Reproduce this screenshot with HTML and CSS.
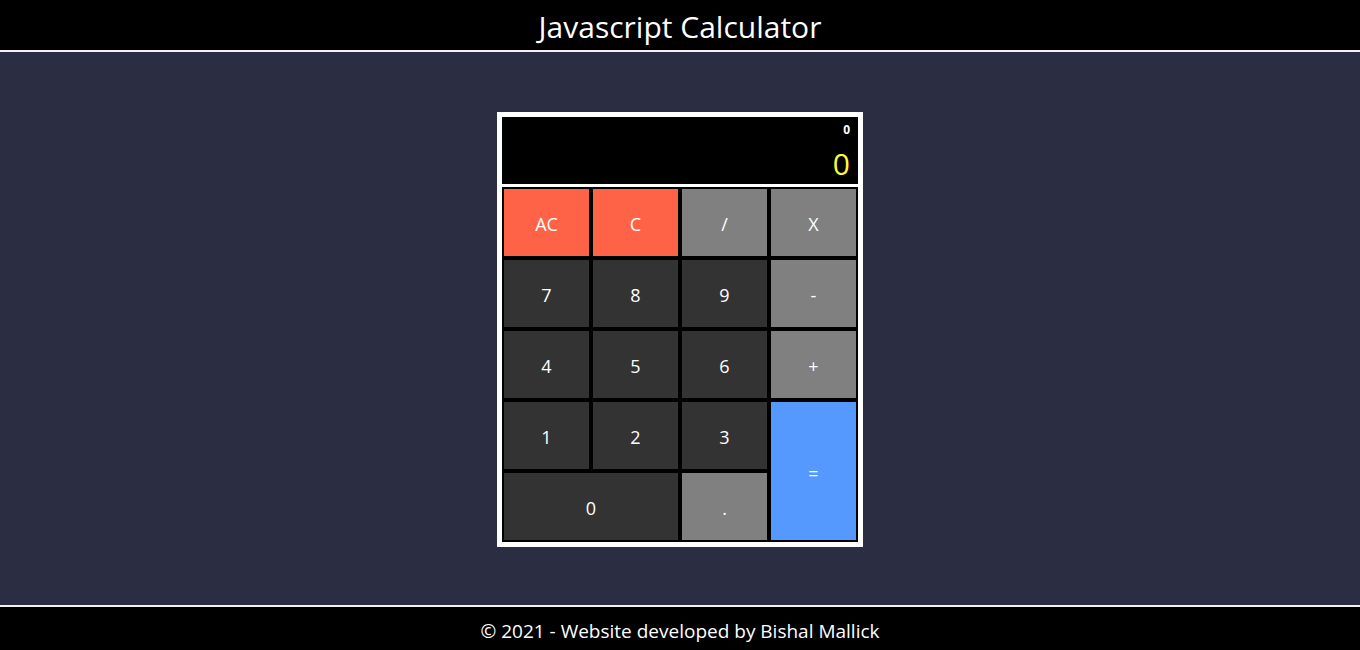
FILE: index.html
```html
<!DOCTYPE html>
<html lang="en">
<head>
<meta charset="utf-8">
<title>Javascript Calculator</title>
<link rel="stylesheet" href="styles.css">
</head>
<body>
<header class="site-header">
  <h1 class="site-title">Javascript Calculator</h1>
</header>
<main class="main">
  <div class="calculator">
    <div class="display">
      <div class="previous">0</div>
      <div class="current">0</div>
    </div>
    <div class="keys">
      <button class="key key-clear">AC</button>
      <button class="key key-clear">C</button>
      <button class="key key-op">/</button>
      <button class="key key-op">X</button>
      <button class="key">7</button>
      <button class="key">8</button>
      <button class="key">9</button>
      <button class="key key-op">-</button>
      <button class="key">4</button>
      <button class="key">5</button>
      <button class="key">6</button>
      <button class="key key-op">+</button>
      <button class="key">1</button>
      <button class="key">2</button>
      <button class="key">3</button>
      <button class="key key-equals">=</button>
      <button class="key key-zero">0</button>
      <button class="key key-op">.</button>
    </div>
  </div>
</main>
<footer class="site-footer">© 2021 - Website developed by Bishal Mallick</footer>
</body>
</html>
```

FILE: styles.css
```css
* { box-sizing: border-box; }
html, body { margin: 0; padding: 0; }
body {
  height: 650px;
  display: flex;
  flex-direction: column;
  background: #2b2d42;
  font-family: "Open Sans", "Noto Sans", sans-serif;
  color: #fff;
  overflow: hidden;
}
.site-header {
  height: 52px;
  background: #000;
  border-bottom: 2px solid #f4f1ee;
  display: flex;
  align-items: center;
  justify-content: center;
  flex: none;
}
.site-title {
  margin: 0;
  font-weight: 400;
  font-size: 30px;
  line-height: 1;
  padding-top: 3px;
}
.main {
  flex: 1;
  display: flex;
  align-items: center;
  justify-content: center;
  padding-top: 2px;
}
.calculator {
  width: 366px;
  background: #fff;
  padding: 5px;
  display: flex;
  flex-direction: column;
  gap: 3px;
}
.display {
  height: 67px;
  background: #000;
  padding: 5px 8px 0 8px;
  text-align: right;
}
.previous {
  font-size: 12px;
  font-weight: 700;
  line-height: 16px;
  height: 22px;
}
.current {
  font-size: 30px;
  line-height: 40px;
  color: #ffff33;
}
.keys {
  display: grid;
  grid-template-columns: repeat(4, 89px);
  grid-auto-rows: 71px;
  background: #000;
}
.key {
  border: 2px solid #000;
  margin: 0;
  background: #333333;
  color: #fff;
  font-family: "Open Sans", "Noto Sans", sans-serif;
  font-size: 18px;
  padding: 3px 0 0 0;
}
.key-clear { background: #ff6347; }
.key-op { background: #808080; }
.key-equals {
  background: #5599ff;
  grid-row: span 2;
  grid-column: 4;
}
.key-zero { grid-column: span 2; }
.site-footer {
  flex: none;
  height: 45px;
  background: #000;
  border-top: 2px solid #f4f1ee;
  display: flex;
  align-items: center;
  justify-content: center;
  font-size: 19px;
  padding-top: 5px;
}
```
